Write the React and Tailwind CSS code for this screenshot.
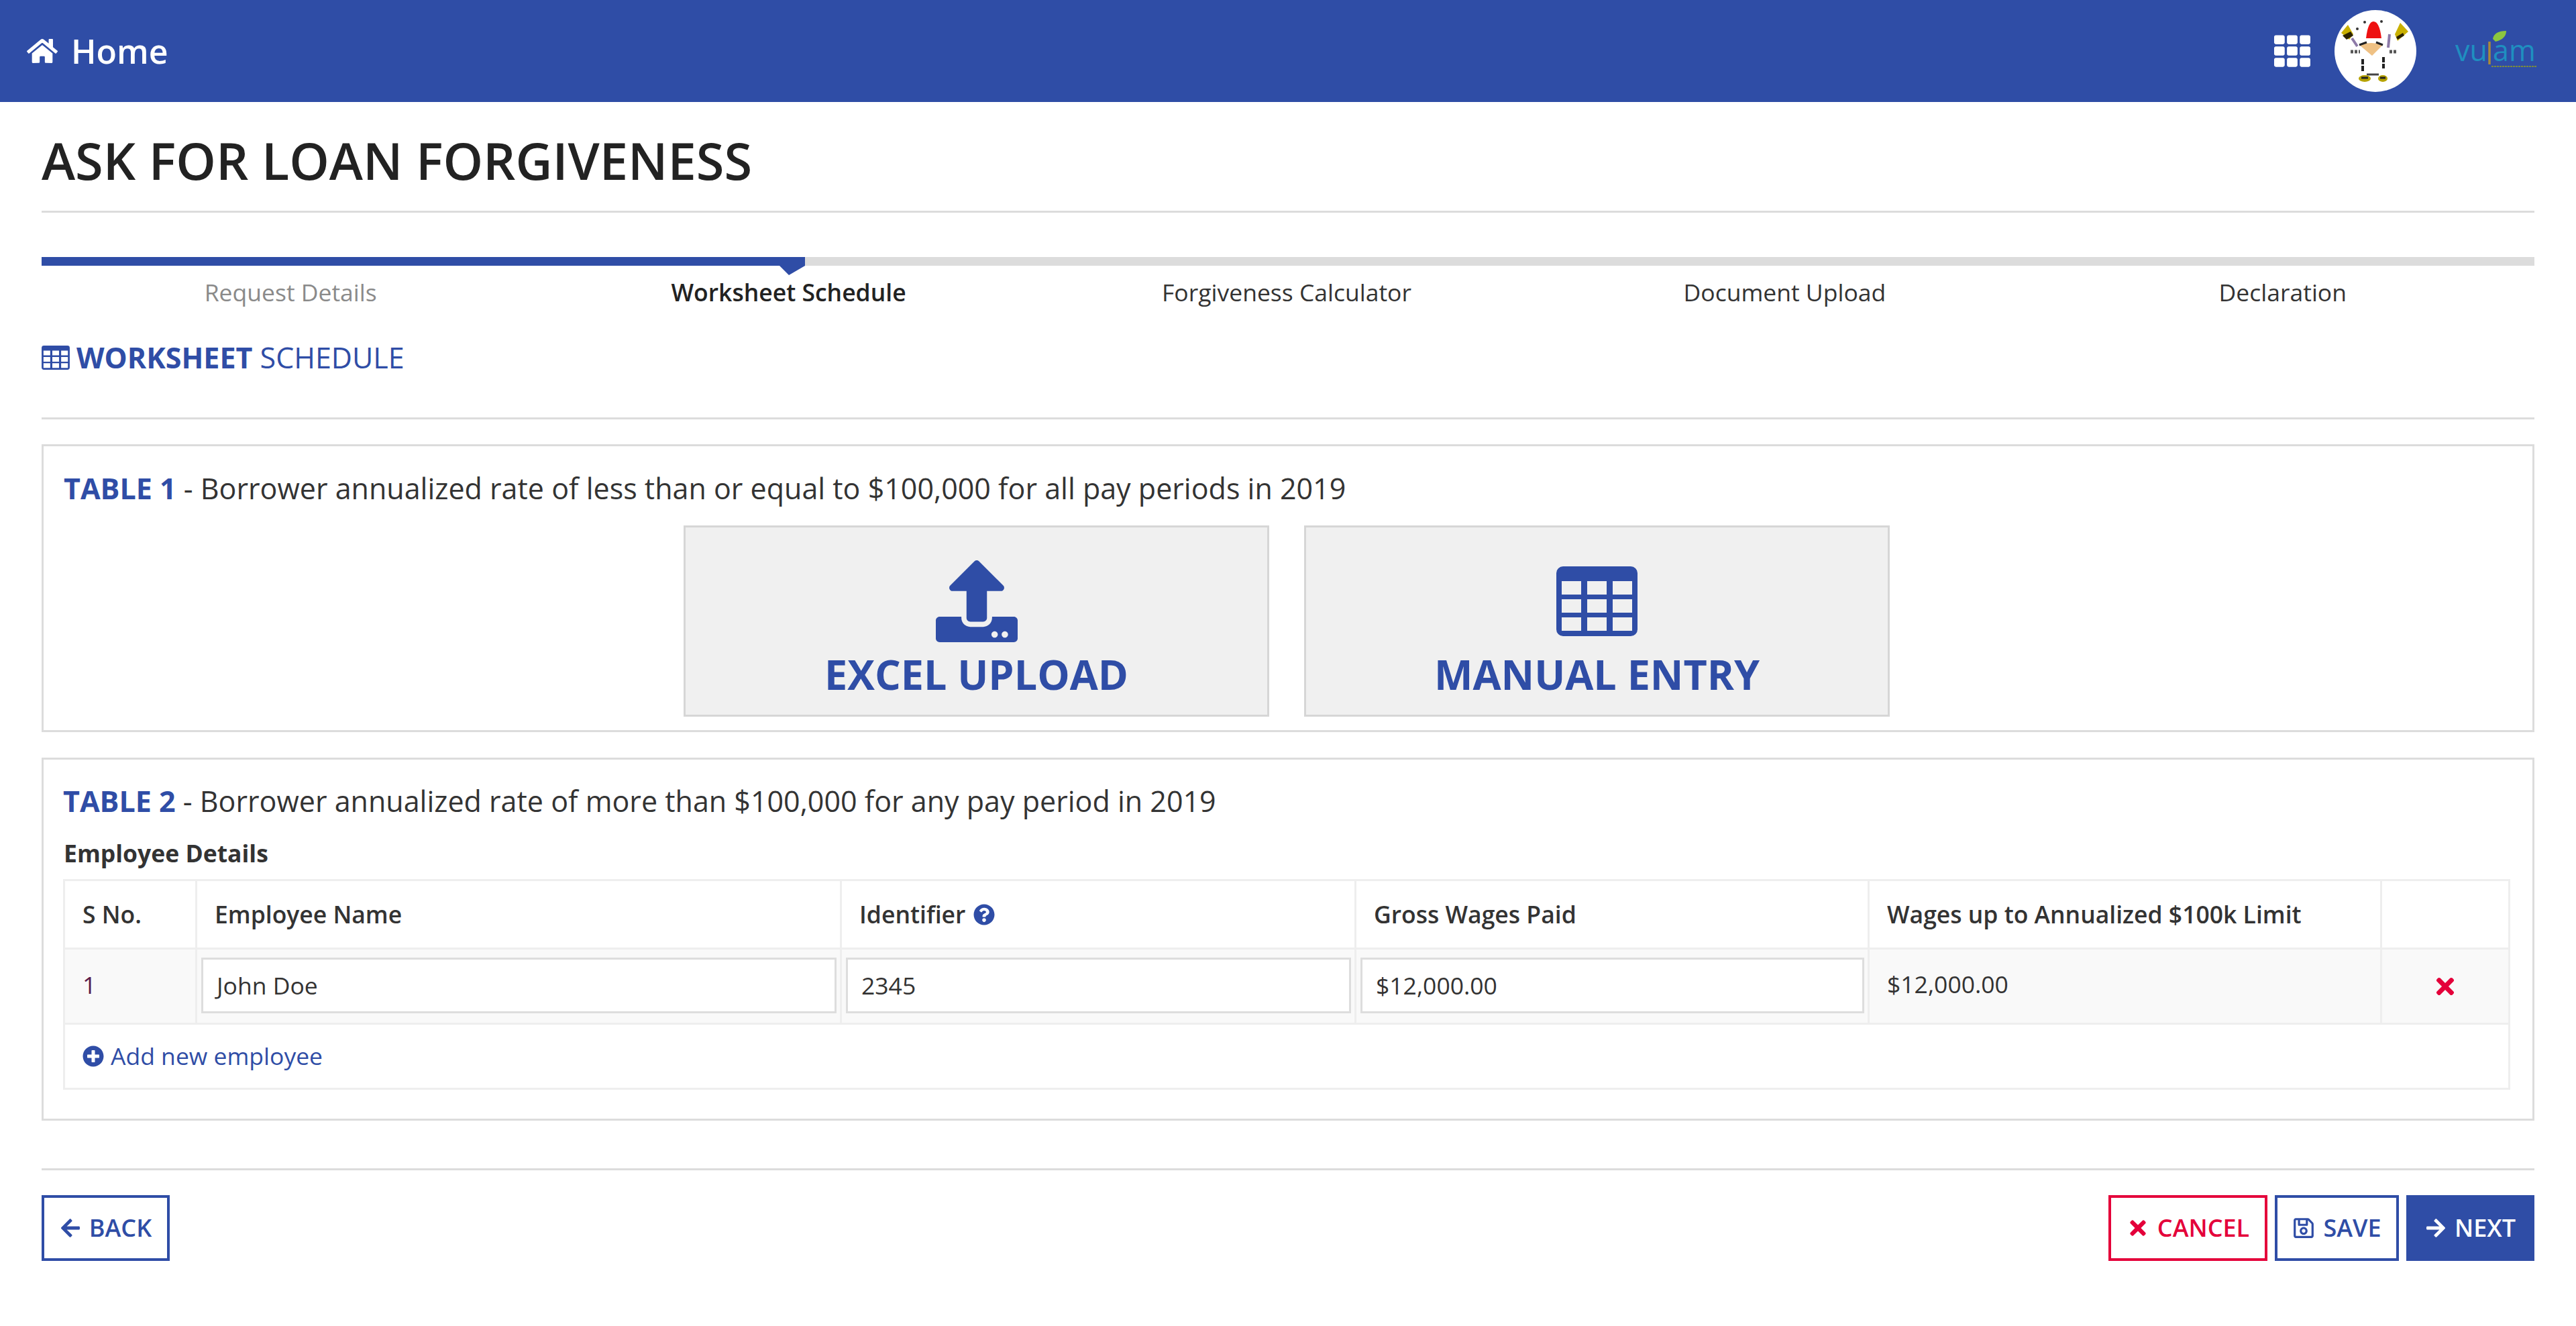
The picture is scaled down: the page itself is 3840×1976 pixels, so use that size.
import React from "react";
import {
  FaHome,
  FaTh,
  FaUpload,
  FaQuestionCircle,
  FaTimes,
  FaPlusCircle,
  FaArrowLeft,
  FaArrowRight,
  FaRegSave,
} from "react-icons/fa";

const steps = [
  { label: "Request Details", cls: "text-[#8a8a8a]" },
  { label: "Worksheet Schedule", cls: "text-[#222222] font-semibold" },
  { label: "Forgiveness Calculator", cls: "text-[#333333]" },
  { label: "Document Upload", cls: "text-[#333333]" },
  { label: "Declaration", cls: "text-[#333333]" },
];

// table glyph with a solid header and 3x3 cut out cells
function TableIcon({ className }) {
  const xs = [8, 46, 84];
  const ys = [22, 49, 76];
  let d = "M10 0h101a10 10 0 0 1 10 10v84a10 10 0 0 1-10 10H10a10 10 0 0 1-10-10V10A10 10 0 0 1 10 0z";
  xs.forEach((x) => ys.forEach((y) => { d += `M${x} ${y}h29v20h-29z`; }));
  return (
    <svg viewBox="0 0 121 104" className={className}>
      <path d={d} fill="currentColor" fillRule="evenodd" />
    </svg>
  );
}

function Avatar() {
  return (
    <div className="w-[122px] h-[122px] rounded-full bg-white overflow-hidden ml-[36px] shrink-0">
      <svg viewBox="0 0 122 122" className="w-full h-full">
        <path d="M47 42 Q50 17 58 17 Q67 17 70 42 Z" fill="#ee1111" />
        <circle cx="45" cy="18" r="2" fill="#333" />
        <circle cx="70" cy="17" r="2" fill="#333" />
        <circle cx="34" cy="28" r="2" fill="#333" />
        <path d="M10 34 L20 22 L28 36 L22 44 Z" fill="#c9b000" />
        <path d="M12 38 l12 -6 l4 6 l-10 6 z" fill="#2b2200" />
        <path d="M110 32 L98 19 L90 36 L94 46 Z" fill="#c9b000" />
        <path d="M92 40 l10 -6 l2 4 l-10 6 z" fill="#2b2200" />
        <path d="M26 42 L34 54 M82 36 L80 56" stroke="#8d7aa8" strokeWidth="4" />
        <path d="M37 52 Q55 46 72 52 L56 68 Z" fill="#efc184" />
        <path d="M37 52 L48 48 M62 48 L72 52" stroke="#222" strokeWidth="3" />
        <path d="M24 62 h14 M82 62 h12" stroke="#555" strokeWidth="5" strokeDasharray="4 2" />
        <path d="M42 73 V92 M73 70 V87" stroke="#222" strokeWidth="4" strokeDasharray="8 2" />
        <path d="M48 96 H66" stroke="#444" strokeWidth="3" />
        <ellipse cx="45" cy="102" rx="9" ry="5" fill="#b6a200" />
        <ellipse cx="72" cy="102" rx="7" ry="5" fill="#b6a200" />
        <path d="M40 101 h10 M68 101 h8" stroke="#222" strokeWidth="3" />
      </svg>
    </div>
  );
}

function VuramLogo() {
  return (
    <svg viewBox="0 0 122 65" className="w-[122px] h-[65px]">
      <path d="M56 14 Q58 2 76 2 Q76 14 60 18 Z" fill="#8cc63f" />
      <path d="M51 18 V52" stroke="#a98a3a" strokeWidth="3.5" />
      <text x="0" y="47" fontFamily="Open Sans, sans-serif" fontSize="43" fill="#1f8fc0">vu</text>
      <text x="56" y="47" fontFamily="Open Sans, sans-serif" fontSize="43" fill="#1f8fc0">am</text>
      <path d="M54 55 H122" stroke="#7a8a40" strokeWidth="2" strokeDasharray="3 1" />
    </svg>
  );
}

function Header() {
  return (
    <header className="h-[152px] bg-[#2f4da6] flex items-center pl-[40px] pr-[58px] text-white">
      <FaHome className="text-[46px] mr-[20px]" />
      <span className="text-[50px] font-semibold">Home</span>
      <div className="ml-auto flex items-center">
        <FaTh className="text-[54px]" />
        <Avatar />
        <div className="ml-[58px]">
          <VuramLogo />
        </div>
      </div>
    </header>
  );
}

function Stepper() {
  return (
    <div className="mt-[66px]">
      <div className="relative h-[13px] bg-[#dcdcdc]">
        <div className="h-full w-[1138px] bg-[#2f4da6]" />
        <div className="absolute left-[1100px] top-[13px] w-0 h-0 border-l-[14px] border-r-[24px] border-x-transparent border-t-[14px] border-t-[#2f4da6]" />
      </div>
      <div className="grid grid-cols-5 h-[52px] mt-[13px] pr-[4px]">
        {steps.map((s) => (
          <div key={s.label} className={`text-center text-[35.5px] leading-[52px] ${s.cls}`}>
            {s.label}
          </div>
        ))}
      </div>
    </div>
  );
}

function TableTitle({ name, children }) {
  return (
    <p className="text-[43px] leading-[56px] text-[#333333]">
      <span className="font-bold text-[#2f4da6]">{name}</span> - {children}
    </p>
  );
}

function BigButton({ icon, label }) {
  return (
    <button className="w-[873px] h-[285px] bg-[#f0f0f0] border-[3px] border-[#d6d6d6] flex flex-col items-center pt-[50px] text-[#2f4da6]">
      <div className="h-[120px] flex items-center">{icon}</div>
      <span className="text-[61px] leading-[76px] font-bold mt-[11px]">{label}</span>
    </button>
  );
}

function Cell({ value }) {
  return (
    <div className="h-[83px] border-[3px] border-[#dddddd] bg-white flex items-center pl-[20px] text-[35.5px] text-[#333333]">
      {value}
    </div>
  );
}

function EmployeeTable() {
  const th = "border-[3px] border-[#eeeeee] px-[26px] text-left text-[35.5px] font-semibold text-[#333333]";
  const td = "border-[3px] border-[#eeeeee] bg-[#f9f9f9] text-[35.5px]";
  return (
    <table className="w-[3645px] table-fixed border-collapse">
      <colgroup>
        <col className="w-[197px]" />
        <col className="w-[961px]" />
        <col className="w-[767px]" />
        <col className="w-[765px]" />
        <col className="w-[764px]" />
        <col className="w-[191px]" />
      </colgroup>
      <thead>
        <tr className="h-[102px]">
          <th className={th}>S No.</th>
          <th className={th}>Employee Name</th>
          <th className={th}>
            <span className="inline-flex items-center gap-[12px]">
              Identifier <FaQuestionCircle className="text-[#2f4da6] text-[32px]" />
            </span>
          </th>
          <th className={th}>Gross Wages Paid</th>
          <th className={th}>Wages up to Annualized $100k Limit</th>
          <th className={th}></th>
        </tr>
      </thead>
      <tbody>
        <tr className="h-[112px]">
          <td className={`${td} px-[26px] pb-[4px] text-[#5b1a4a]`}>1</td>
          <td className={`${td} pl-[6px] pr-[5px] pb-[2px]`}><Cell value="John Doe" /></td>
          <td className={`${td} pl-[6px] pr-[5px] pb-[2px]`}><Cell value="2345" /></td>
          <td className={`${td} pl-[6px] pr-[5px] pb-[2px]`}><Cell value="$12,000.00" /></td>
          <td className={`${td} px-[26px] pb-[6px] text-[#333333]`}>$12,000.00</td>
          <td className={td}>
            <FaTimes className="text-[#e4003a] text-[38px] mx-auto" />
          </td>
        </tr>
        <tr className="h-[97px]">
          <td colSpan={6} className="border-[3px] border-[#eeeeee] px-[26px]">
            <span className="inline-flex items-center gap-[10px] text-[35.5px] text-[#2f4da6]">
              <FaPlusCircle className="text-[32px]" /> Add new employee
            </span>
          </td>
        </tr>
      </tbody>
    </table>
  );
}

function FootButton({ icon, label, cls }) {
  return (
    <button className={`h-[98px] border-[4px] flex items-center justify-center gap-[12px] text-[36px] font-semibold ${cls}`}>
      {icon}
      {label}
    </button>
  );
}

export default function App() {
  return (
    <div className="min-h-[1976px] bg-white" style={{ fontFamily: '"Open Sans", sans-serif' }}>
      <Header />
      <main className="px-[62px]">
        <h1 className="h-[165px] flex items-center border-b-[3px] border-[#dcdcdc] text-[75.8px] font-semibold text-[#222222] pt-[12px]">
          ASK FOR LOAN FORGIVENESS
        </h1>
        <Stepper />
        <div className="h-[164px] border-b-[3px] border-[#dcdcdc] pt-[43px]">
          <h2 className="flex items-center gap-[10px] text-[43px] leading-[58px] text-[#2f4da6]">
            <TableIcon className="w-[42px] h-[36px]" />
            <span><b className="font-bold">WORKSHEET</b> SCHEDULE</span>
          </h2>
        </div>

        <section className="mt-[37px] h-[429px] border-[3px] border-[#dcdcdc] px-[30px] pt-[35px]">
          <TableTitle name="TABLE 1">Borrower annualized rate of less than or equal to $100,000 for all pay periods in 2019</TableTitle>
          <div className="flex justify-center gap-[52px] mt-[27px] mr-[4px]">
            <BigButton icon={<FaUpload className="text-[122px]" />} label="EXCEL UPLOAD" />
            <BigButton icon={<TableIcon className="w-[121px] h-[104px]" />} label="MANUAL ENTRY" />
          </div>
        </section>

        <section className="mt-[38px] h-[541px] border-[3px] border-[#dcdcdc] pl-[29px] pt-[34px]">
          <TableTitle name="TABLE 2">Borrower annualized rate of more than $100,000 for any pay period in 2019</TableTitle>
          <p className="text-[35.5px] leading-[50px] font-bold text-[#333333] mt-[24px] mb-[14px] ml-[1px]">Employee Details</p>
          <EmployeeTable />
        </section>

        <footer className="mt-[71px] border-t-[3px] border-[#dcdcdc] pt-[37px] flex">
          <FootButton icon={<FaArrowLeft className="text-[32px]" />} label="BACK" cls="w-[191px] border-[#2f4da6] text-[#2f4da6]" />
          <div className="ml-auto flex gap-[11px]">
            <FootButton icon={<FaTimes className="text-[34px]" />} label="CANCEL" cls="w-[237px] border-[#e4003a] text-[#e4003a]" />
            <FootButton icon={<FaRegSave className="text-[34px]" />} label="SAVE" cls="w-[185px] border-[#2f4da6] text-[#2f4da6]" />
            <FootButton icon={<FaArrowRight className="text-[32px]" />} label="NEXT" cls="w-[191px] border-[#2f4da6] bg-[#2f4da6] text-white" />
          </div>
        </footer>
      </main>
    </div>
  );
}
